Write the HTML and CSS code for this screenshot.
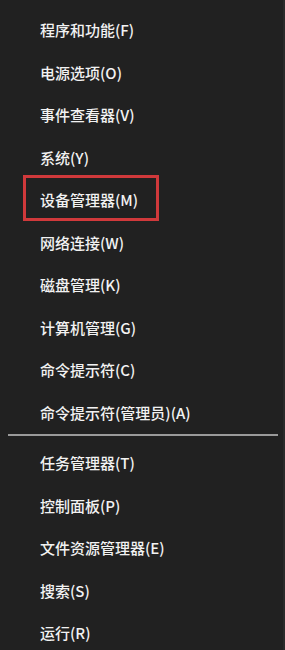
FILE: index.html
```html
<!DOCTYPE html>
<html lang="zh-CN">
  <head>
    <meta charset="UTF-8" />
    <meta name="viewport" content="width=device-width, initial-scale=1.0" />
    <title>快速链接菜单</title>
    <link rel="stylesheet" href="styles.css">
  </head>
  <body>
    <div class="menu">
      <ul class="group">
        <li>程序和功能(F)</li>
        <li>电源选项(O)</li>
        <li>事件查看器(V)</li>
        <li>系统(Y)</li>
        <li><span class="marked">设备管理器(M)</span></li>
        <li>网络连接(W)</li>
        <li>磁盘管理(K)</li>
        <li>计算机管理(G)</li>
        <li>命令提示符(C)</li>
        <li>命令提示符(管理员)(A)</li>
      </ul>
      <div class="divider"></div>
      <ul class="group">
        <li>任务管理器(T)</li>
        <li>控制面板(P)</li>
        <li>文件资源管理器(E)</li>
        <li>搜索(S)</li>
        <li>运行(R)</li>
      </ul>
    </div>
  </body>
</html>
```

FILE: styles.css
```css
body {
  margin: 0;
  padding: 0;
  background-color: #212121;
  color: #f2f2f2;
  font-family: "Noto Sans CJK SC", "Liberation Sans", sans-serif;
}
.menu {
  height: 650px;
  padding-top: 9px;
  box-sizing: border-box;
  border-right: 2px solid #2a2a2a;
}
.group {
  list-style: none;
  margin: 0;
  padding: 0;
}
.group li {
  height: 42.5px;
  line-height: 42.5px;
  padding-left: 40px;
  font-size: 15px;
  font-weight: 500;
  white-space: nowrap;
}
.marked {
  position: relative;
}
.marked::after {
  content: "";
  position: absolute;
  left: -17px;
  right: -21px;
  top: -14px;
  bottom: -11px;
  border: 3px solid #d0393b;
}
.divider {
  height: 2px;
  margin: 0 5px 6px 8px;
  background: #9a9a9a;
}
```
